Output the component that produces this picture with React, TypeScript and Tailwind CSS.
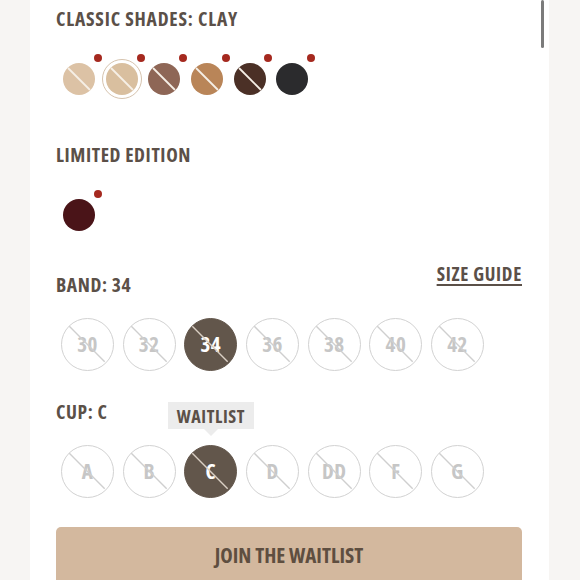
type Swatch = { color: string; selected?: boolean; crossed: boolean };

const classic: Swatch[] = [
  { color: "#dcc2a5", crossed: true },
  { color: "#d9bf9f", crossed: true, selected: true },
  { color: "#8e6656", crossed: true },
  { color: "#b98558", crossed: true },
  { color: "#4b3026", crossed: true },
  { color: "#2b2b2d", crossed: false },
];

function ColorSwatch({ s }: { s: Swatch }) {
  return (
    <div className="relative w-[42.6px] h-[40px] flex items-center justify-center">
      <div
        className={
          "w-[40px] h-[40px] rounded-full flex items-center justify-center " +
          (s.selected ? "border-[1.5px] border-[#d6c3ae]" : "border-[1.5px] border-transparent")
        }
      >
        <div className="relative w-[32px] h-[32px] rounded-full overflow-hidden" style={{ backgroundColor: s.color }}>
          {s.crossed && (
            <svg className="absolute inset-0" width="32" height="32" viewBox="0 0 32 32">
              <line x1="5" y1="5" x2="27" y2="27" stroke="#f6efe6" strokeWidth="1.8" />
            </svg>
          )}
        </div>
      </div>
      <span className="absolute left-[36px] top-[-5px] w-[8px] h-[8px] rounded-full bg-[#a5291f]" />
    </div>
  );
}

function SizeCircle({ label, selected }: { label: string; selected?: boolean }) {
  return (
    <div
      className={
        "relative w-[53px] h-[53px] rounded-full flex items-center justify-center border-[1.5px] " +
        (selected ? "bg-[#62564b] border-[#62564b] text-white" : "bg-white border-[#d2d2d2] text-[#c6c6c6]")
      }
    >
      <span className="text-[21px] leading-none tracking-[0.5px]">{label}</span>
      <svg className="absolute inset-0" width="50" height="50" viewBox="0 0 50 50">
        <line x1="7.3" y1="7.3" x2="42.7" y2="42.7" stroke={selected ? "#d9cfc4" : "#cfcfcf"} strokeWidth="1.4" />
      </svg>
    </div>
  );
}

export default function App() {
  const bands = ["30", "32", "34", "36", "38", "40", "42"];
  const cups = ["A", "B", "C", "D", "DD", "F", "G"];
  return (
    <div className="h-[580px] overflow-hidden bg-[#f7f5f3] font-['Open_Sans',sans-serif] font-bold font-stretch-[82%]">
      <div className="relative ml-[30px] w-[519px] h-[580px] bg-white pl-[26px] pr-[27px] pt-[7px]">
        <div className="absolute right-[5px] top-0 w-[3px] h-[48px] rounded-full bg-[#7b7b7b]" />

        <h2 className="text-[19.5px] leading-[24px] tracking-[0.8px] text-[#5b5048]">CLASSIC SHADES: CLAY</h2>
        <div className="mt-[28px] pl-[2px] flex">
          {classic.map((s, i) => (
            <ColorSwatch key={i} s={s} />
          ))}
        </div>

        <h2 className="mt-[44px] text-[19.5px] leading-[24px] tracking-[0.6px] text-[#5b5048]">LIMITED EDITION</h2>
        <div className="mt-[28px] pl-[2px] flex">
          <ColorSwatch s={{ color: "#4a1418", crossed: false }} />
        </div>

        <div className="mt-[28px] flex items-end justify-between">
          <h2 className="text-[19.5px] leading-[24px] tracking-[0.6px] text-[#5b5048]">BAND: 34</h2>
          <a className="mb-[12px] text-[19px] leading-[22px] tracking-[0.7px] text-[#5b5048] underline decoration-[1.5px] underline-offset-[3px]">
            SIZE GUIDE
          </a>
        </div>
        <div className="mt-[21px] pl-[5px] flex gap-[8.7px]">
          {bands.map((b) => (
            <SizeCircle key={b} label={b} selected={b === "34"} />
          ))}
        </div>

        <h2 className="mt-[29px] text-[19.5px] leading-[24px] tracking-[0.6px] text-[#5b5048]">CUP: C</h2>
        <div className="mt-[21px] pl-[5px] flex gap-[8.7px]">
          {cups.map((c) => (
            <div key={c} className="relative">
              <SizeCircle label={c} selected={c === "C"} />
              {c === "C" && (
                <div className="absolute left-1/2 -translate-x-1/2 bottom-[62px] flex flex-col items-center">
                  <div className="w-[86px] h-[27px] bg-[#ececec] flex items-center justify-center text-[18px] leading-none tracking-[0.6px] text-[#5b5048]">
                    WAITLIST
                  </div>
                  <div className="w-0 h-0 border-l-[7px] border-r-[7px] border-t-[7px] border-l-transparent border-r-transparent border-t-[#ececec]" />
                </div>
              )}
            </div>
          ))}
        </div>

        <button className="mt-[29px] w-full h-[60px] rounded-[5px] bg-[#d3b89e] flex items-start justify-center pt-[16px] text-[21px] leading-[24px] text-[#5e4e40]">
          JOIN THE WAITLIST
        </button>
      </div>
    </div>
  );
}
